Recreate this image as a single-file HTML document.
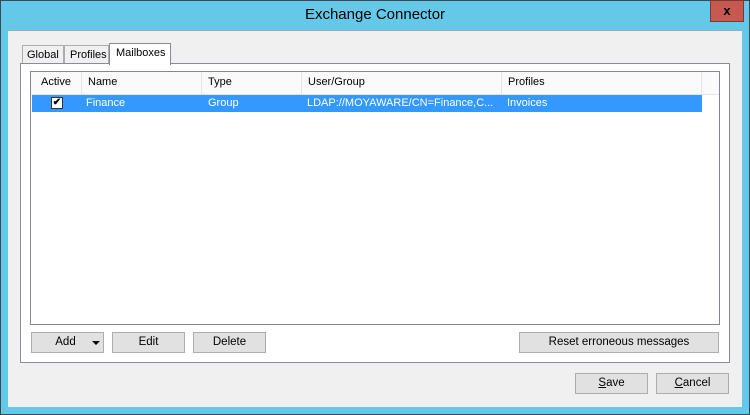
<!DOCTYPE html>
<html><head><style>
*{margin:0;padding:0;box-sizing:border-box}
body{width:750px;height:415px;background:#64c9e9;font-family:"Liberation Sans",sans-serif;font-size:11px;color:#000;position:relative;overflow:hidden}
.a{position:absolute}
.btn{position:absolute;background:#e1e1e1;border:1px solid #adadad;text-align:center;line-height:19px;height:21px;font-size:11.5px}
.h{position:absolute;top:0;height:22px;border-right:1px solid #e5e5e5;line-height:20px;padding-left:6px}
.c{position:absolute;top:0;line-height:16px;padding-left:3px;color:#fff;white-space:nowrap}
</style></head><body>
<div class="a" style="left:0;top:0;width:750px;height:415px;border:1px solid #3a4a52"></div>
<div class="a" style="left:0;top:6px;width:750px;text-align:center;font-size:15px;color:#000">Exchange Connector</div>
<div class="a" style="left:710px;top:0;width:34px;height:22px;background:#c75a50;border:1px solid #7a3a34;text-align:center;font-weight:bold;font-size:13px;line-height:19px">x</div>
<div class="a" style="left:8px;top:30px;width:734px;height:377px;background:#f0f0f0;border-top:1px solid #9ab"></div>
<div class="a" style="left:22px;top:45px;width:42px;height:19px;border:1px solid #adadad;border-bottom:none;background:#f0f0f0;padding-left:4px;line-height:18px">Global</div>
<div class="a" style="left:64px;top:45px;width:45px;height:19px;border:1px solid #adadad;border-bottom:none;background:#f0f0f0;padding-left:5px;line-height:18px">Profiles</div>
<div class="a" style="left:20px;top:63px;width:710px;height:300px;border:1px solid #898c95;background:#fff"></div>
<div class="a" style="left:109px;top:43px;width:62px;height:22px;border:1px solid #898c95;border-bottom:none;background:#fff;padding-left:6px;line-height:18px;z-index:2">Mailboxes</div>
<div class="a" style="left:30px;top:71px;width:690px;height:254px;border:1px solid #828790;background:#fff;overflow:hidden">
 <div class="a" style="left:0;top:0;width:690px;height:23px;background:#fafafa;border-bottom:1px solid #e5e5e5"></div>
 <div class="h" style="left:1px;width:50px;padding-left:9px">Active</div>
 <div class="h" style="left:51px;width:120px">Name</div>
 <div class="h" style="left:171px;width:100px">Type</div>
 <div class="h" style="left:271px;width:200px">User/Group</div>
 <div class="h" style="left:471px;width:200px">Profiles</div>
 <div class="a" style="left:1px;top:23px;width:670px;height:17px;background:#3399ff">
  <div class="a" style="left:19px;top:2px;width:12px;height:12px;background:#fff;border:1px solid #333;font-size:10px;line-height:10px;text-align:center;color:#000;font-weight:bold">✔</div>
  <div class="c" style="left:51px">Finance</div>
  <div class="c" style="left:173px">Group</div>
  <div class="c" style="left:272px;width:190px;overflow:hidden">LDAP://MOYAWARE/CN=Finance,C...</div>
  <div class="c" style="left:472px">Invoices</div>
 </div>
</div>
<div class="btn" style="left:31px;top:332px;width:73px;padding-right:4px">Add<span style="position:absolute;left:60px;top:8px;width:0;height:0;border-left:4px solid transparent;border-right:4px solid transparent;border-top:4px solid #000"></span></div>
<div class="btn" style="left:112px;top:332px;width:73px">Edit</div>
<div class="btn" style="left:193px;top:332px;width:73px">Delete</div>
<div class="btn" style="left:519px;top:332px;width:200px">Reset erroneous messages</div>
<div class="btn" style="left:575px;top:373px;width:73px"><u>S</u>ave</div>
<div class="btn" style="left:656px;top:373px;width:73px"><u>C</u>ancel</div>
</body></html>
